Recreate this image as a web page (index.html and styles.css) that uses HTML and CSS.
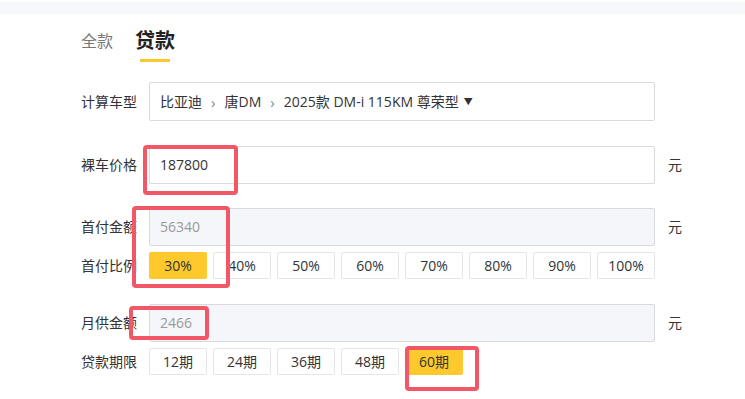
FILE: index.html
```html
<!DOCTYPE html>
<html lang="zh-CN">
<head>
<meta charset="utf-8">
<link rel="stylesheet" href="styles.css">
</head>
<body>
<div class="page">
  <div class="topband"></div>
  <div class="content">
    <div class="tabs">
      <span class="tab">全款</span>
      <span class="tab active">贷款</span>
    </div>
    <div class="row row-select">
      <span class="label">计算车型</span>
      <div class="field select">比亚迪<span class="sep">›</span>唐DM<span class="sep">›</span>2025款 DM-i 115KM 尊荣型<span class="caret">▼</span></div>
    </div>
    <div class="row row-price">
      <span class="label">裸车价格</span>
      <div class="field input">187800</div>
      <span class="unit">元</span>
    </div>
    <div class="row row-down">
      <span class="label">首付金额</span>
      <div class="field input readonly">56340</div>
      <span class="unit">元</span>
    </div>
    <div class="row row-opts">
      <span class="label">首付比例</span>
      <div class="opts">
        <span class="opt on">30%</span>
        <span class="opt">40%</span>
        <span class="opt">50%</span>
        <span class="opt">60%</span>
        <span class="opt">70%</span>
        <span class="opt">80%</span>
        <span class="opt">90%</span>
        <span class="opt">100%</span>
      </div>
    </div>
    <div class="row row-month">
      <span class="label">月供金额</span>
      <div class="field input readonly">2466</div>
      <span class="unit">元</span>
    </div>
    <div class="row row-opts">
      <span class="label">贷款期限</span>
      <div class="opts">
        <span class="opt">12期</span>
        <span class="opt">24期</span>
        <span class="opt">36期</span>
        <span class="opt">48期</span>
        <span class="opt on">60期</span>
      </div>
    </div>
  </div>
  <div class="mark mark1"></div>
  <div class="mark mark2"></div>
  <div class="mark mark3"></div>
  <div class="mark mark4"></div>
</div>
</body>
</html>
```
FILE: styles.css
```css
* { box-sizing: border-box; }
html, body { margin: 0; padding: 0; background: #fff; }
body {
  font-family: "Open Sans", "Noto Sans CJK SC", sans-serif;
  color: #333;
  width: 745px;
  height: 399px;
  overflow: hidden;
}
.page { position: relative; width: 745px; height: 399px; }
.topband { margin-top: 2px; height: 12px; background: #f7f8fc; }
.content { padding-left: 81px; }
.tabs {
  display: flex;
  align-items: center;
  gap: 22px;
  height: 30px;
  margin-top: 12px;
}
.tab { font-size: 16px; color: #777; line-height: 30px; }
.tab.active {
  font-size: 20px;
  font-weight: 700;
  color: #222;
  position: relative;
}
.tab.active::after {
  content: "";
  position: absolute;
  left: 5px;
  bottom: -6px;
  width: 30px;
  height: 3px;
  background: #fcc82c;
}
.row { display: flex; align-items: center; line-height: 20px; }
.label { width: 68px; font-size: 14px; color: #333; flex: none; }
.field {
  width: 506px;
  border: 1px solid #d9d9de;
  border-radius: 2px;
  padding-left: 10px;
  display: flex;
  align-items: center;
  font-size: 14px;
  color: #333;
}
.row-select { margin-top: 26px; }
.select { height: 39px; }
.sep { color: #888; margin: 0 9px; font-size: 15px; }
.caret { font-size: 9px; margin-left: 5px; color: #333; }
.input { height: 38px; }
.readonly { background: #f5f6fa; color: #999; }
.unit { font-size: 14px; margin-left: 13px; color: #333; }
.row-price { margin-top: 25px; }
.row-down { margin-top: 24px; }
.row-opts { margin-top: 6px; }
.row-month { margin-top: 25px; }
.opts { display: flex; gap: 6px; }
.opt {
  width: 58px;
  height: 27px;
  border: 1px solid #e6e6ea;
  border-radius: 2px;
  font-size: 14px;
  color: #333;
  display: flex;
  align-items: center;
  justify-content: center;
}
.opt.on { background: #fdc92c; border-color: #fdc92c; }
.mark {
  position: absolute;
  border: 4px solid #f25767;
  border-radius: 4px;
}
.mark1 { left: 143px; top: 143px; width: 95px; height: 50px; }
.mark2 { left: 132px; top: 204px; width: 98px; height: 82px; }
.mark3 { left: 129px; top: 304px; width: 80px; height: 34px; }
.mark4 { left: 405px; top: 344px; width: 74px; height: 45px; }
```
